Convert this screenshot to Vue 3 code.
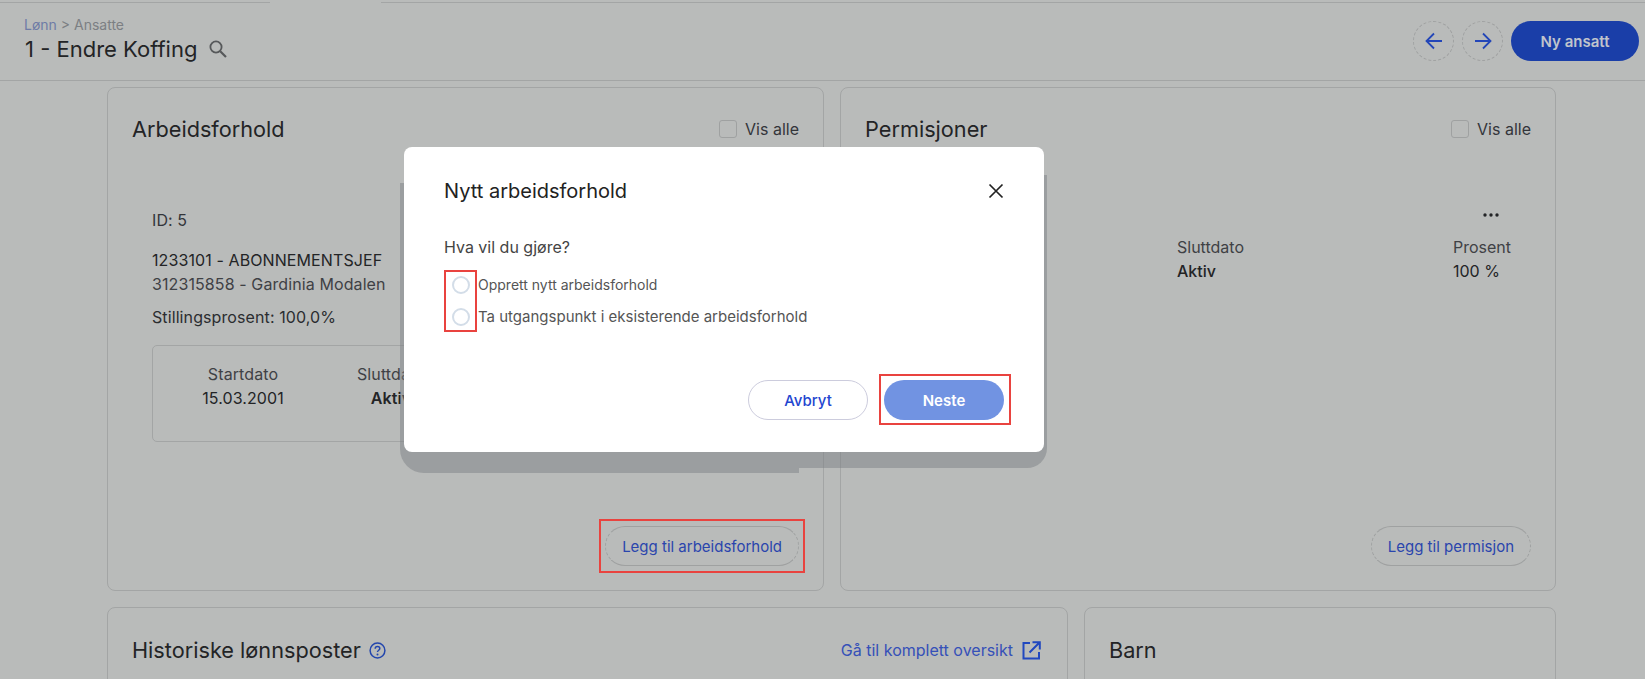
<template>
  <div class="page">
    <div class="tabs-line">
      <span class="tab-rest tab-rest-left"></span>
      <span class="tab-active"></span>
      <span class="tab-rest"></span>
    </div>

    <header class="top-bar">
      <div>
        <div class="crumbs"><span class="crumb-link">Lønn</span> &gt; Ansatte</div>
        <div class="employee">
          <h1>1 - Endre Koffing</h1>
          <svg class="search-icon" width="20" height="20" viewBox="0 0 20 20" fill="none" aria-hidden="true">
            <circle cx="8" cy="8" r="5.6" stroke="currentColor" stroke-width="1.8"/>
            <path d="M12.2 12.2L18 18" stroke="currentColor" stroke-width="2.2"/>
          </svg>
        </div>
      </div>
      <div class="top-actions">
        <button class="round-btn" aria-label="Forrige">
          <svg width="20" height="20" viewBox="0 0 20 20" fill="none" aria-hidden="true">
            <path d="M18 10H3M10 2.5L2.5 10l7.5 7.5" stroke="currentColor" stroke-width="1.8"/>
          </svg>
        </button>
        <button class="round-btn" aria-label="Neste">
          <svg width="20" height="20" viewBox="0 0 20 20" fill="none" aria-hidden="true">
            <path d="M2 10h15M10 2.5l7.5 7.5-7.5 7.5" stroke="currentColor" stroke-width="1.8"/>
          </svg>
        </button>
        <button class="primary-btn">Ny ansatt</button>
      </div>
    </header>

    <main class="cards">
      <div class="row row-top">
        <section class="card">
          <div class="card-head">
            <h2>Arbeidsforhold</h2>
            <label class="check"><span class="check-box"></span>Vis alle</label>
          </div>
          <div class="job">
            <div class="job-id">ID: 5</div>
            <div class="job-title">1233101 - ABONNEMENTSJEF</div>
            <div class="job-org">312315858 - Gardinia Modalen</div>
            <div class="job-percent">Stillingsprosent: 100,0%</div>
            <div class="job-dates">
              <div class="date-col date-start">
                <span>Startdato</span>
                <strong>15.03.2001</strong>
              </div>
              <div class="date-col date-end">
                <span>Sluttdato</span>
                <strong class="bold">Aktiv</strong>
              </div>
            </div>
          </div>
          <div class="card-foot">
            <button class="outline-btn marked">
              Legg til arbeidsforhold
              <span class="mark mark-add"></span>
            </button>
          </div>
        </section>

        <section class="card">
          <div class="card-head">
            <h2>Permisjoner</h2>
            <label class="check"><span class="check-box"></span>Vis alle</label>
          </div>
          <div class="leave">
            <svg class="dots" width="16" height="4" viewBox="0 0 16 4" aria-hidden="true">
              <circle cx="2" cy="2" r="1.7"/>
              <circle cx="8" cy="2" r="1.7"/>
              <circle cx="14" cy="2" r="1.7"/>
            </svg>
            <div class="leave-cols">
              <div class="leave-col">
                <span>Sluttdato</span>
                <strong class="bold">Aktiv</strong>
              </div>
              <div class="leave-col">
                <span>Prosent</span>
                <strong>100 %</strong>
              </div>
            </div>
          </div>
          <div class="card-foot">
            <button class="outline-btn">Legg til permisjon</button>
          </div>
        </section>
      </div>

      <div class="row row-bottom">
        <section class="card card-low">
          <div class="card-head">
            <h2 class="with-help">
              Historiske lønnsposter
              <svg width="17" height="17" viewBox="0 0 17 17" fill="none" aria-hidden="true">
                <circle cx="8.5" cy="8.5" r="7.4" stroke="#2346ad" stroke-width="1.5"/>
                <path d="M6.2 6.8c0-1.4 1-2.2 2.3-2.2s2.3.8 2.3 2c0 1.7-2.3 1.6-2.3 3.4" stroke="#2346ad" stroke-width="1.5"/>
                <circle cx="8.5" cy="12.4" r="1" fill="#2346ad"/>
              </svg>
            </h2>
            <a class="overview-link">
              Gå til komplett oversikt
              <svg width="19" height="19" viewBox="0 0 19 19" fill="none" aria-hidden="true">
                <path d="M8 2H1.5v15.5H17V11" stroke="#2148bf" stroke-width="2"/>
                <path d="M7.5 11.5L17 2M10.5 1.2h7.3v7.3" stroke="#2148bf" stroke-width="2"/>
              </svg>
            </a>
          </div>
        </section>
        <section class="card card-low">
          <div class="card-head">
            <h2>Barn</h2>
          </div>
        </section>
      </div>
    </main>

    <div class="modal-shadow shadow-left"></div>
    <div class="modal-shadow shadow-right"></div>

    <div class="modal">
      <div class="modal-head">
        <h3>Nytt arbeidsforhold</h3>
        <svg width="16" height="16" viewBox="0 0 16 16" fill="none" aria-label="Lukk">
          <path d="M1.5 1.5l13 13M14.5 1.5l-13 13" stroke="#222" stroke-width="1.7"/>
        </svg>
      </div>
      <p class="modal-question">Hva vil du gjøre?</p>
      <div class="options">
        <label class="option"><span class="radio"></span>Opprett nytt arbeidsforhold</label>
        <label class="option option-long"><span class="radio"></span>Ta utgangspunkt i eksisterende arbeidsforhold</label>
        <span class="mark mark-radios"></span>
      </div>
      <div class="modal-foot">
        <button class="cancel-btn">Avbryt</button>
        <button class="next-btn marked">
          Neste
          <span class="mark mark-next"></span>
        </button>
      </div>
    </div>
  </div>
</template>

<script setup>
</script>

<style>
html,
body {
  margin: 0;
  overflow: hidden;
  background: #b9bbba;
}
</style>

<style scoped>
.page {
  position: relative;
  width: 1645px;
  height: 679px;
  overflow: hidden;
  background: #b9bbba;
  color: #26282b;
  font-family: Inter, "Liberation Sans", sans-serif;
  font-size: 16px;
}

button {
  font-family: inherit;
  cursor: pointer;
}

.tabs-line {
  display: flex;
  height: 3px;
}

.tab-rest {
  flex: 1;
  border-bottom: 1px solid #a3a5a5;
  height: 2px;
}

.tab-rest-left {
  flex: 0 0 270px;
}

.tab-active {
  flex: 0 0 111px;
}

.top-bar {
  display: flex;
  justify-content: space-between;
  align-items: flex-start;
  height: 77px;
  padding: 0 6px 0 25px;
  border-bottom: 1px solid #a3a5a5;
  box-sizing: content-box;
}

.crumbs {
  margin: 13px 0 0 -1px;
  line-height: 17px;
  font-size: 14px;
  color: #7c7f83;
}

.crumb-link {
  color: #6e7ba6;
}

.employee {
  display: flex;
  align-items: center;
  gap: 11px;
  margin-top: 1px;
}

.employee h1 {
  margin: 0;
  font-size: 22px;
  line-height: 30px;
  font-weight: 400;
  color: #232426;
}

.search-icon {
  color: #56585a;
}

.top-actions {
  display: flex;
  gap: 8px;
  margin-top: 18px;
}

.round-btn {
  display: flex;
  align-items: center;
  justify-content: center;
  width: 41px;
  height: 40px;
  padding: 0;
  border: 1px dashed #9fa1a1;
  border-radius: 50%;
  background: none;
  color: #2346b8;
}

.primary-btn {
  width: 128px;
  height: 40px;
  border: 0;
  border-radius: 20px;
  background: #1a3ea8;
  color: #c0c4cc;
  font-size: 15px;
  font-weight: 600;
}

.cards {
  display: flex;
  flex-direction: column;
  gap: 16px;
  width: 1449px;
  margin: 6px 0 0 107px;
}

.row {
  display: grid;
  gap: 16px;
}

.row-top {
  grid-template-columns: 717px 1fr;
}

.row-bottom {
  grid-template-columns: 961px 1fr;
}

.card {
  display: flex;
  flex-direction: column;
  height: 504px;
  box-sizing: border-box;
  padding: 29px 24px 24px;
  border: 1px solid #a3a5a5;
  border-radius: 8px;
}

.card-low {
  height: 200px;
  padding-top: 30px;
}

.card-head {
  display: flex;
  justify-content: space-between;
  align-items: center;
  height: 24px;
}

.card-head h2 {
  margin: 0;
  font-size: 21.7px;
  line-height: 24px;
  font-weight: 400;
  color: #232426;
}

.check {
  display: flex;
  align-items: center;
  gap: 8px;
  font-size: 16px;
  color: #33353a;
}

.check-box {
  width: 16px;
  height: 16px;
  border: 1px solid #9fa1a1;
  border-radius: 3px;
}

.job {
  margin: 69px 0 0 20px;
  line-height: 24px;
  letter-spacing: 0.1px;
}

.job-id {
  line-height: 20px;
  margin-bottom: 18px;
  color: #33353a;
}

.job-title {
  color: #232426;
}

.job-org {
  color: #3f4145;
}

.job-percent {
  margin-top: 9px;
  line-height: 24px;
  color: #2b2d30;
}

.job-dates {
  display: flex;
  width: 600px;
  height: 97px;
  box-sizing: border-box;
  margin-top: 16px;
  padding-top: 16px;
  border: 1px solid #a3a5a5;
  border-radius: 5px;
}

.date-col {
  display: flex;
  flex-direction: column;
  align-items: center;
}

.date-col span {
  color: #3f4145;
}

.date-col strong {
  font-weight: 400;
  color: #232426;
}

.date-col strong.bold {
  font-weight: 600;
}

.date-start {
  width: 180px;
}

.date-end {
  margin-left: 24px;
}

.card-foot {
  display: flex;
  justify-content: flex-end;
  margin-top: auto;
}

.outline-btn {
  height: 40px;
  padding: 0 16px;
  border: 1px solid #9fa1a1;
  border-style: solid dashed;
  border-radius: 20px;
  background: none;
  color: #2a45ad;
  font-size: 15px;
}

.marked {
  position: relative;
}

.mark {
  position: absolute;
  box-sizing: border-box;
  border: 2px solid #e9433f;
  pointer-events: none;
}

.mark-add {
  inset: -8px -7px -8px -7px;
}

.leave {
  display: flex;
  flex-direction: column;
  margin-top: 72px;
  padding-left: 312px;
}

.dots {
  align-self: flex-end;
  margin-right: 32px;
  fill: #232426;
}

.leave-cols {
  display: grid;
  grid-template-columns: 276px 1fr;
  margin-top: 18px;
  line-height: 24px;
}

.leave-col {
  display: flex;
  flex-direction: column;
}

.leave-col span {
  color: #3f4145;
}

.leave-col strong {
  font-weight: 400;
  color: #232426;
}

.leave-col strong.bold {
  font-weight: 500;
}

.with-help {
  display: flex;
  align-items: center;
  gap: 8px;
}

.overview-link {
  display: flex;
  align-items: center;
  gap: 9px;
  padding-right: 2px;
  color: #3550b8;
  font-size: 16px;
}

.modal-shadow {
  position: absolute;
  background: rgba(125, 129, 134, 0.5);
}

.shadow-left {
  left: 400px;
  top: 183px;
  width: 399px;
  height: 290px;
  border-bottom-left-radius: 24px;
}

.shadow-right {
  left: 799px;
  top: 175px;
  width: 248px;
  height: 293px;
  border-bottom-right-radius: 20px;
}

.modal {
  position: absolute;
  left: 404px;
  top: 147px;
  display: flex;
  flex-direction: column;
  width: 640px;
  height: 305px;
  box-sizing: border-box;
  padding: 32px 40px;
  border-radius: 8px;
  background: #fff;
  color: #222;
}

.modal-head {
  display: flex;
  justify-content: space-between;
  align-items: center;
  height: 24px;
}

.modal-head h3 {
  margin: 0;
  font-size: 20px;
  line-height: 24px;
  font-weight: 400;
}

.modal-question {
  margin: 34px 0 12px;
  font-size: 16px;
  line-height: 20px;
  color: #444;
}

.options {
  position: relative;
}

.option {
  display: flex;
  align-items: center;
  gap: 8px;
  height: 32px;
  box-sizing: border-box;
  padding: 0 0 2px 8px;
  color: #555;
  font-size: 14px;
}

.option-long {
  font-size: 15px;
}

.radio {
  width: 14px;
  height: 14px;
  margin-top: 2px;
  border: 2px solid #d3dde8;
  border-radius: 50%;
}

.mark-radios {
  left: 0;
  top: 1px;
  width: 33px;
  height: 62px;
}

.modal-foot {
  display: flex;
  justify-content: flex-end;
  gap: 16px;
  margin-top: 47px;
}

.cancel-btn,
.next-btn {
  width: 120px;
  height: 40px;
  border-radius: 20px;
  font-size: 15px;
}

.cancel-btn {
  border: 1px solid #ccd;
  background: #fff;
  color: #2346d0;
  font-weight: 500;
}

.next-btn {
  border: 0;
  background: #7193e2;
  color: #fff;
  font-weight: 600;
}

.mark-next {
  inset: -6px -7px -5px -5px;
}
</style>
